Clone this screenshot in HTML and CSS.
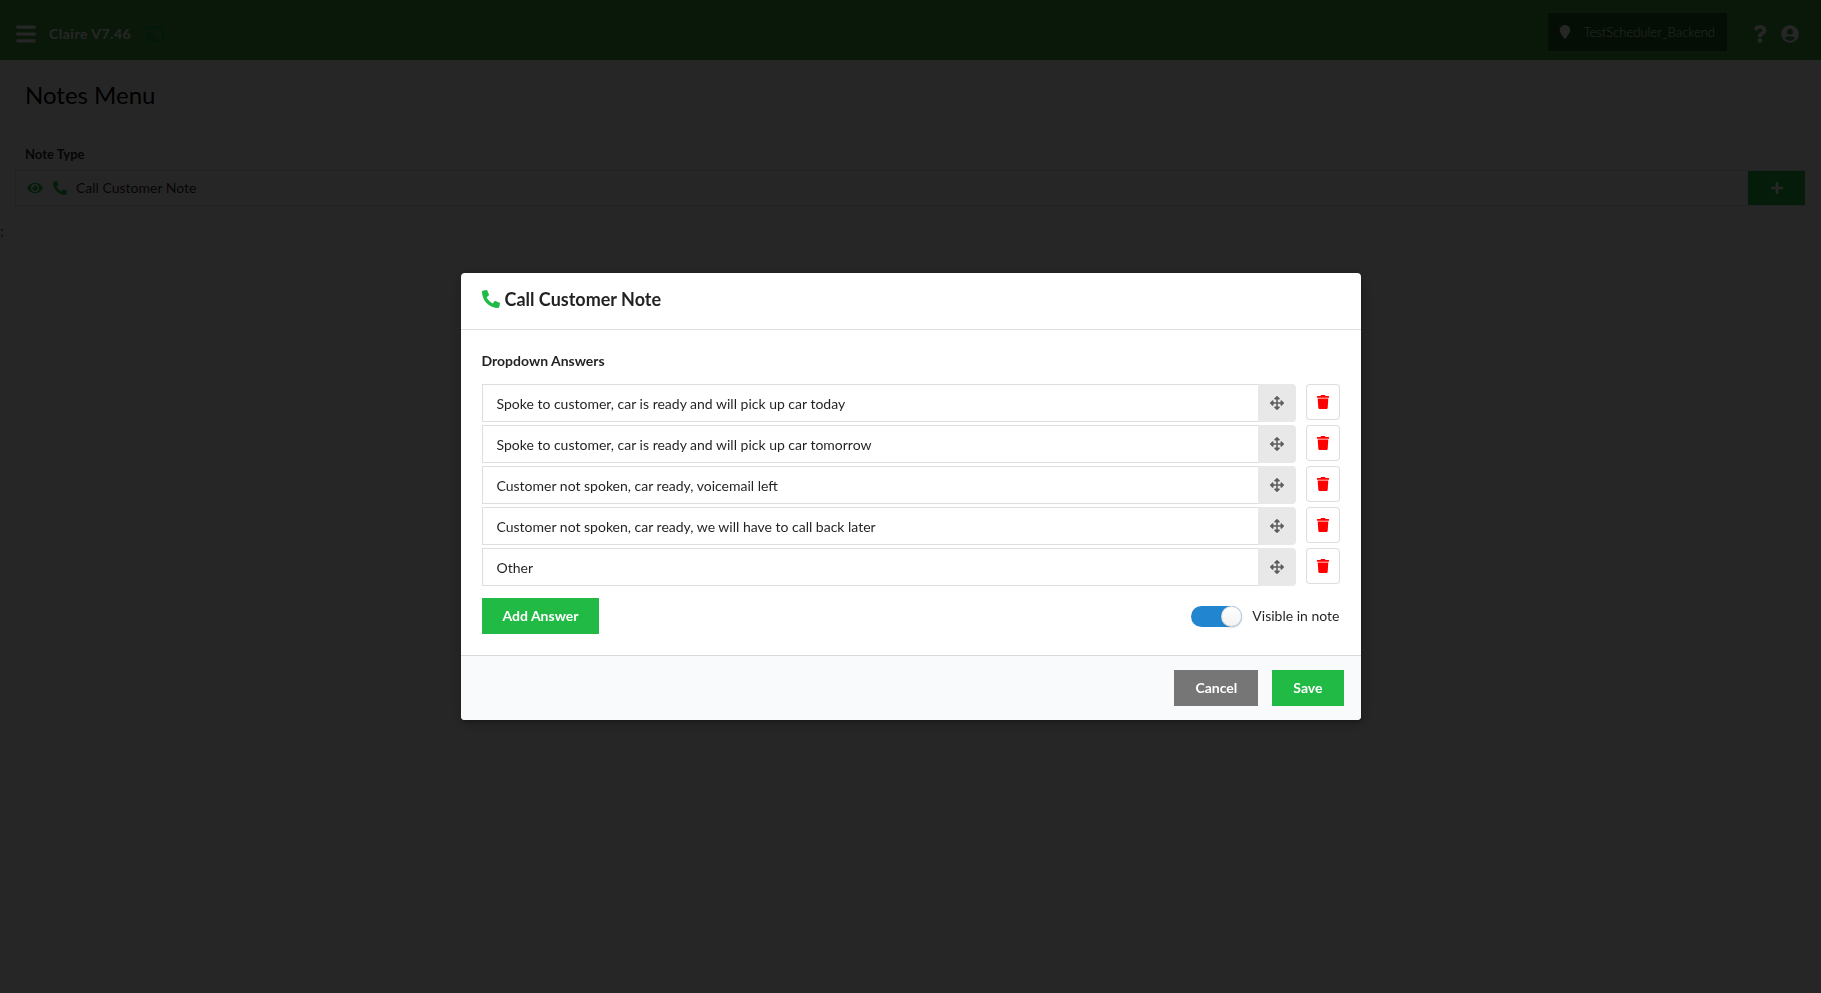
FILE: index.html
```
<!DOCTYPE html>
<html lang="en">
<head>
<meta charset="utf-8">
<meta name="viewport" content="width=device-width, initial-scale=1">
<title>Claire - Notes Menu</title>
<link rel="stylesheet" href="styles.css">
</head>
<body>
<svg class="sprite" aria-hidden="true">
  <symbol id="bars" viewBox="0 0 448 512"><path d="M16 132h416c8.800 0 16-7.200 16-16V76c0-8.800-7.200-16-16-16H16C7.200 60 0 67.200 0 76v40c0 8.800 7.200 16 16 16zm0 160h416c8.800 0 16-7.200 16-16v-40c0-8.800-7.200-16-16-16H16c-8.800 0-16 7.200-16 16v40c0 8.800 7.200 16 16 16zm0 160h416c8.800 0 16-7.200 16-16v-40c0-8.800-7.200-16-16-16H16c-8.800 0-16 7.200-16 16v40c0 8.800 7.200 16 16 16z"/></symbol>
  <symbol id="cast" viewBox="0 0 24 24"><path d="M21 3H3c-1.100 0-2 .9-2 2v3h2V5h18v14h-7v2h7c1.100 0 2-.9 2-2V5c0-1.100-.9-2-2-2zM1 18v3h3c0-1.660-1.340-3-3-3zm0-4v2c2.760 0 5 2.240 5 5h2c0-3.870-3.130-7-7-7zm0-4v2c4.970 0 9 4.030 9 9h2c0-6.080-4.930-11-11-11z"/></symbol>
  <symbol id="pin" viewBox="0 0 384 512"><path d="M172 502C27 291 0 270 0 192 0 86 86 0 192 0s192 86 192 192c0 78-27 99-172 310-10 13-30 13-40 0z"/></symbol>
  <symbol id="question" viewBox="0 0 384 512"><path d="M202 0C122 0 70 33 29 91c-7 11-5 25 5 32l43 33c11 8 25 6 33-4 25-32 44-50 83-50 31 0 69 20 69 50 0 22-19 34-49 51-35 20-82 45-82 106v18c0 13 11 24 24 24h72c13 0 24-11 24-24v-10c0-43 125-44 125-160C376 70 286 0 202 0zM192 374c-38 0-69 31-69 69s31 69 69 69 69-31 69-69-31-69-69-69z"/></symbol>
  <symbol id="user" viewBox="0 0 496 512"><path d="M248 8C111 8 0 119 0 256s111 248 248 248 248-111 248-248S385 8 248 8zm0 96c49 0 88 39 88 88s-39 88-88 88-88-39-88-88 39-88 88-88zm0 344c-59 0-111-27-146-69 18-35 55-59 98-59 8 0 22 8 48 8 27 0 40-8 48-8 43 0 80 24 98 59-35 42-87 69-146 69z"/></symbol>
  <symbol id="eye" viewBox="0 0 576 512"><path fill-rule="evenodd" d="M572 241C518 135 410 64 288 64S58 135 4 241a32 32 0 0 0 0 30c54 106 162 177 284 177s230-71 284-177a32 32 0 0 0 0-30zM288 400a144 144 0 1 1 0-288 144 144 0 0 1 0 288zm0-240c-9 0-17 1-25 4a48 48 0 0 1-67 67 96 96 0 1 0 92-71z"/></symbol>
  <symbol id="phone" viewBox="0 0 512 512"><path d="M493 24.600l-104-24c-11-3-23 3-27 14l-48 112c-4 10-2 22 7 28l60 50c-36 76-98 139-176 176l-50-60c-7-9-18-11-28-7L15 361c-11 5-17 17-14 28l24 104c2 11 12 19 23 19 256 0 464-207 464-464 0-11-8-21-19-23.400z" transform="matrix(-1 0 0 1 512 0)"/></symbol>
  <symbol id="plus" viewBox="0 0 448 512"><path d="M416 208H272V64c0-18-14-32-32-32h-32c-18 0-32 14-32 32v144H32c-18 0-32 14-32 32v32c0 18 14 32 32 32h144v144c0 18 14 32 32 32h32c18 0 32-14 32-32V304h144c18 0 32-14 32-32v-32c0-18-14-32-32-32z"/></symbol>
  <symbol id="move" viewBox="0 0 512 512"><path d="M352 426l-79 79a24 24 0 0 1-34 0l-79-79c-15-15-5-41 17-41h51V284H127v51c0 22-26 32-41 17L7 273a24 24 0 0 1 0-34l79-79c15-15 41-5 41 17v51h101V127h-51c-22 0-32-26-17-41l79-79a24 24 0 0 1 34 0l79 79c15 15 5 41-17 41h-51v101h101v-51c0-22 26-32 41-17l79 79a24 24 0 0 1 0 34l-79 79c-15 15-41 5-41-17v-51H284v101h51c22 0 32 26 17 41z"/></symbol>
  <symbol id="trash" viewBox="0 0 448 512"><path d="M0 84V56c0-13 11-24 24-24h112l9-19c4-8 12-13 22-13h114c9 0 17 5 22 13l9 19h112c13 0 24 11 24 24v28c0 7-5 12-12 12H12c-7 0-12-5-12-12z"/><path d="M32 140c0-7 5-12 12-12h360c7 0 12 5 12 12l-20 327c-2 25-23 45-48 45H100c-25 0-46-20-48-45z"/></symbol>
</svg>

<header class="navbar">
  <button class="icon-btn" type="button" aria-label="Menu"><svg class="icon-nav"><use href="#bars"/></svg></button>
  <span class="brand">Claire V7.46</span>
  <svg class="icon-cast"><use href="#cast"/></svg>
  <button class="location" type="button"><svg class="icon-small"><use href="#pin"/></svg><span>TestScheduler_Backend</span></button>
  <button class="icon-btn" type="button" aria-label="Help"><svg class="icon-help"><use href="#question"/></svg></button>
  <button class="icon-btn" type="button" aria-label="Account"><svg class="icon-user"><use href="#user"/></svg></button>
</header>

<main class="page">
  <h1 class="page-title">Notes Menu</h1>
  <h2 class="list-title">Note Type</h2>
  <div class="note-row">
    <svg class="icon-eye"><use href="#eye"/></svg>
    <svg class="icon-small"><use href="#phone"/></svg>
    <span class="note-name">Call Customer Note</span>
    <button class="add-note" type="button" aria-label="Add note"><svg class="icon-small"><use href="#plus"/></svg></button>
  </div>
</main>
<div class="tail">;</div>

<div class="dimmer">
  <form class="modal" role="dialog" aria-modal="true" aria-labelledby="modal-title">
    <header class="modal-header">
      <svg class="icon-phone"><use href="#phone"/></svg>
      <h2 class="modal-title" id="modal-title">Call Customer Note</h2>
    </header>
    <div class="modal-body">
      <h3 class="section-label" id="answers">Dropdown Answers</h3>
      <ul class="answers">
        <li class="answer"><input class="answer-input" type="text" aria-labelledby="answers" value="Spoke to customer, car is ready and will pick up car today"><button class="move" type="button" aria-label="Move"><svg class="icon-small"><use href="#move"/></svg></button><button class="delete" type="button" aria-label="Delete"><svg class="icon-small"><use href="#trash"/></svg></button></li>
        <li class="answer"><input class="answer-input" type="text" aria-labelledby="answers" value="Spoke to customer, car is ready and will pick up car tomorrow"><button class="move" type="button" aria-label="Move"><svg class="icon-small"><use href="#move"/></svg></button><button class="delete" type="button" aria-label="Delete"><svg class="icon-small"><use href="#trash"/></svg></button></li>
        <li class="answer"><input class="answer-input" type="text" aria-labelledby="answers" value="Customer not spoken, car ready, voicemail left"><button class="move" type="button" aria-label="Move"><svg class="icon-small"><use href="#move"/></svg></button><button class="delete" type="button" aria-label="Delete"><svg class="icon-small"><use href="#trash"/></svg></button></li>
        <li class="answer"><input class="answer-input" type="text" aria-labelledby="answers" value="Customer not spoken, car ready, we will have to call back later"><button class="move" type="button" aria-label="Move"><svg class="icon-small"><use href="#move"/></svg></button><button class="delete" type="button" aria-label="Delete"><svg class="icon-small"><use href="#trash"/></svg></button></li>
        <li class="answer"><input class="answer-input" type="text" aria-labelledby="answers" value="Other"><button class="move" type="button" aria-label="Move"><svg class="icon-small"><use href="#move"/></svg></button><button class="delete" type="button" aria-label="Delete"><svg class="icon-small"><use href="#trash"/></svg></button></li>
      </ul>
      <div class="body-actions">
        <button class="btn btn-green" type="button">Add Answer</button>
        <label class="toggle" for="visible"><input class="switch" id="visible" type="checkbox" checked><span>Visible in note</span></label>
      </div>
    </div>
    <footer class="modal-footer">
      <button class="btn btn-grey" type="button">Cancel</button>
      <button class="btn btn-green" type="submit">Save</button>
    </footer>
  </form>
</div>
</body>
</html>
```
FILE: styles.css
```
* { box-sizing: border-box; }

body {
  margin: 0;
  background: #fff;
  color: rgba(0, 0, 0, .87);
  font: 14px/20px Lato, "Liberation Sans", sans-serif;
}

button, input { margin: 0; font: inherit; }
button { cursor: pointer; }
h1, h2, h3, ul { margin: 0; padding: 0; }
svg { display: block; flex: none; fill: currentColor; }

.sprite { position: absolute; width: 0; height: 0; }
.icon-small { width: 14px; height: 14px; }
.icon-nav { width: 20px; height: 22px; }
.icon-cast { width: 20px; height: 20px; color: #009c4a; }
.icon-help { width: 14px; height: 18px; }
.icon-user { width: 18px; height: 18px; }
.icon-eye { width: 16px; height: 14px; }
.icon-phone { width: 18px; height: 18px; color: #21ba45; }

/* Top bar */
.navbar {
  display: flex;
  align-items: center;
  height: 60px;
  padding: 8px 22px 0 16px;
  background: #43a047;
  color: #fff;
}
.icon-btn { padding: 0; border: 0; background: none; color: inherit; }
.brand { margin: 0 14px 0 13px; font-weight: 700; letter-spacing: .5px; }
.location {
  display: flex;
  align-items: center;
  gap: 12px;
  height: 38px;
  margin: 0 26px 4px auto;
  padding: 0 12px 0 10px;
  border: 0;
  background: #1b5e20;
  color: #fff;
  font-size: 13px;
  font-weight: 300;
}
.icon-btn + .icon-btn { margin-left: 14px; }

/* Page behind the dialog */
.page { padding: 19px 16px 0 15px; }
.page-title {
  padding-left: 10px;
  color: #000;
  font-size: 24px;
  line-height: 32px;
  font-weight: 400;
}
.list-title {
  margin: 33px 0 6px;
  padding-left: 10px;
  font-size: 13px;
  line-height: 20px;
}
.note-row {
  display: flex;
  align-items: center;
  height: 36px;
  padding-left: 11px;
  border: 1px solid #e4e4e4;
  border-right: 0;
  color: #21ba45;
}
.note-row .icon-eye { margin-right: 10px; }
.note-name { flex: 1; margin-left: 9px; color: rgba(0, 0, 0, .87); }
.add-note {
  display: grid;
  place-items: center;
  width: 57px;
  height: 34px;
  border: 0;
  background: #21ba45;
  color: #fff;
}
.tail { padding-top: 15px; }

/* Dialog */
.dimmer {
  position: fixed;
  inset: 0;
  display: flex;
  align-items: center;
  justify-content: center;
  background: rgba(0, 0, 0, .85);
}
.modal {
  width: 900px;
  max-width: 95%;
  border-radius: 4px;
  overflow: hidden;
  background: #fff;
  box-shadow: 1px 3px 3px 0 rgba(0, 0, 0, .2), 1px 3px 15px 2px rgba(0, 0, 0, .2);
}
.modal-header {
  display: flex;
  align-items: center;
  gap: 5px;
  padding: 14px 21px 18px;
  border-bottom: 1px solid rgba(34, 36, 38, .15);
}
.modal-title { font-size: 18px; line-height: 24px; }
.modal-body { padding: 21px; }
.section-label { margin-bottom: 13px; font-size: 14px; line-height: 20px; }
.answers { display: grid; gap: 3px; list-style: none; }
.answer { display: flex; height: 38px; }
.answer-input {
  flex: 1;
  min-width: 0;
  padding: 2px 14px 0;
  border: 1px solid rgba(34, 36, 38, .15);
  border-right: 0;
  border-radius: 0;
  outline: 0;
  background: #fff;
  color: rgba(0, 0, 0, .87);
}
.move, .delete { display: grid; place-items: center; padding: 0; }
.move {
  width: 38px;
  border: 0;
  border-radius: 0 4px 4px 0;
  background: #e8e8e8;
  color: rgba(0, 0, 0, .6);
}
.delete {
  width: 34px;
  height: 36px;
  margin-left: 10px;
  border: 1px solid rgba(34, 36, 38, .15);
  border-radius: 4px;
  background: #fff;
  color: #f00;
}
.body-actions {
  display: flex;
  align-items: center;
  justify-content: space-between;
  margin-top: 12px;
}
.btn {
  height: 36px;
  padding: 0 21px;
  border: 0;
  color: #fff;
  font-weight: 700;
}
.btn-green { background: #21ba45; }
.btn-grey { background: #767676; }
.toggle { display: flex; align-items: center; gap: 10px; }
.switch {
  appearance: none;
  display: flex;
  justify-content: flex-end;
  width: 51px;
  height: 21px;
  border-radius: 11px;
  background: #2185d0;
}
.switch::before {
  content: "";
  width: 21px;
  height: 21px;
  border-radius: 50%;
  background: linear-gradient(#fff, #f2f2f2);
  box-shadow: 0 1px 2px rgba(34, 36, 38, .15), inset 0 0 0 1px rgba(34, 36, 38, .15);
}
.switch:not(:checked) { justify-content: flex-start; background: #ddd; }
.modal-footer {
  display: flex;
  justify-content: flex-end;
  gap: 14px;
  padding: 14px 17px 14px;
  border-top: 1px solid rgba(34, 36, 38, .15);
  background: #f9fafb;
}
```
